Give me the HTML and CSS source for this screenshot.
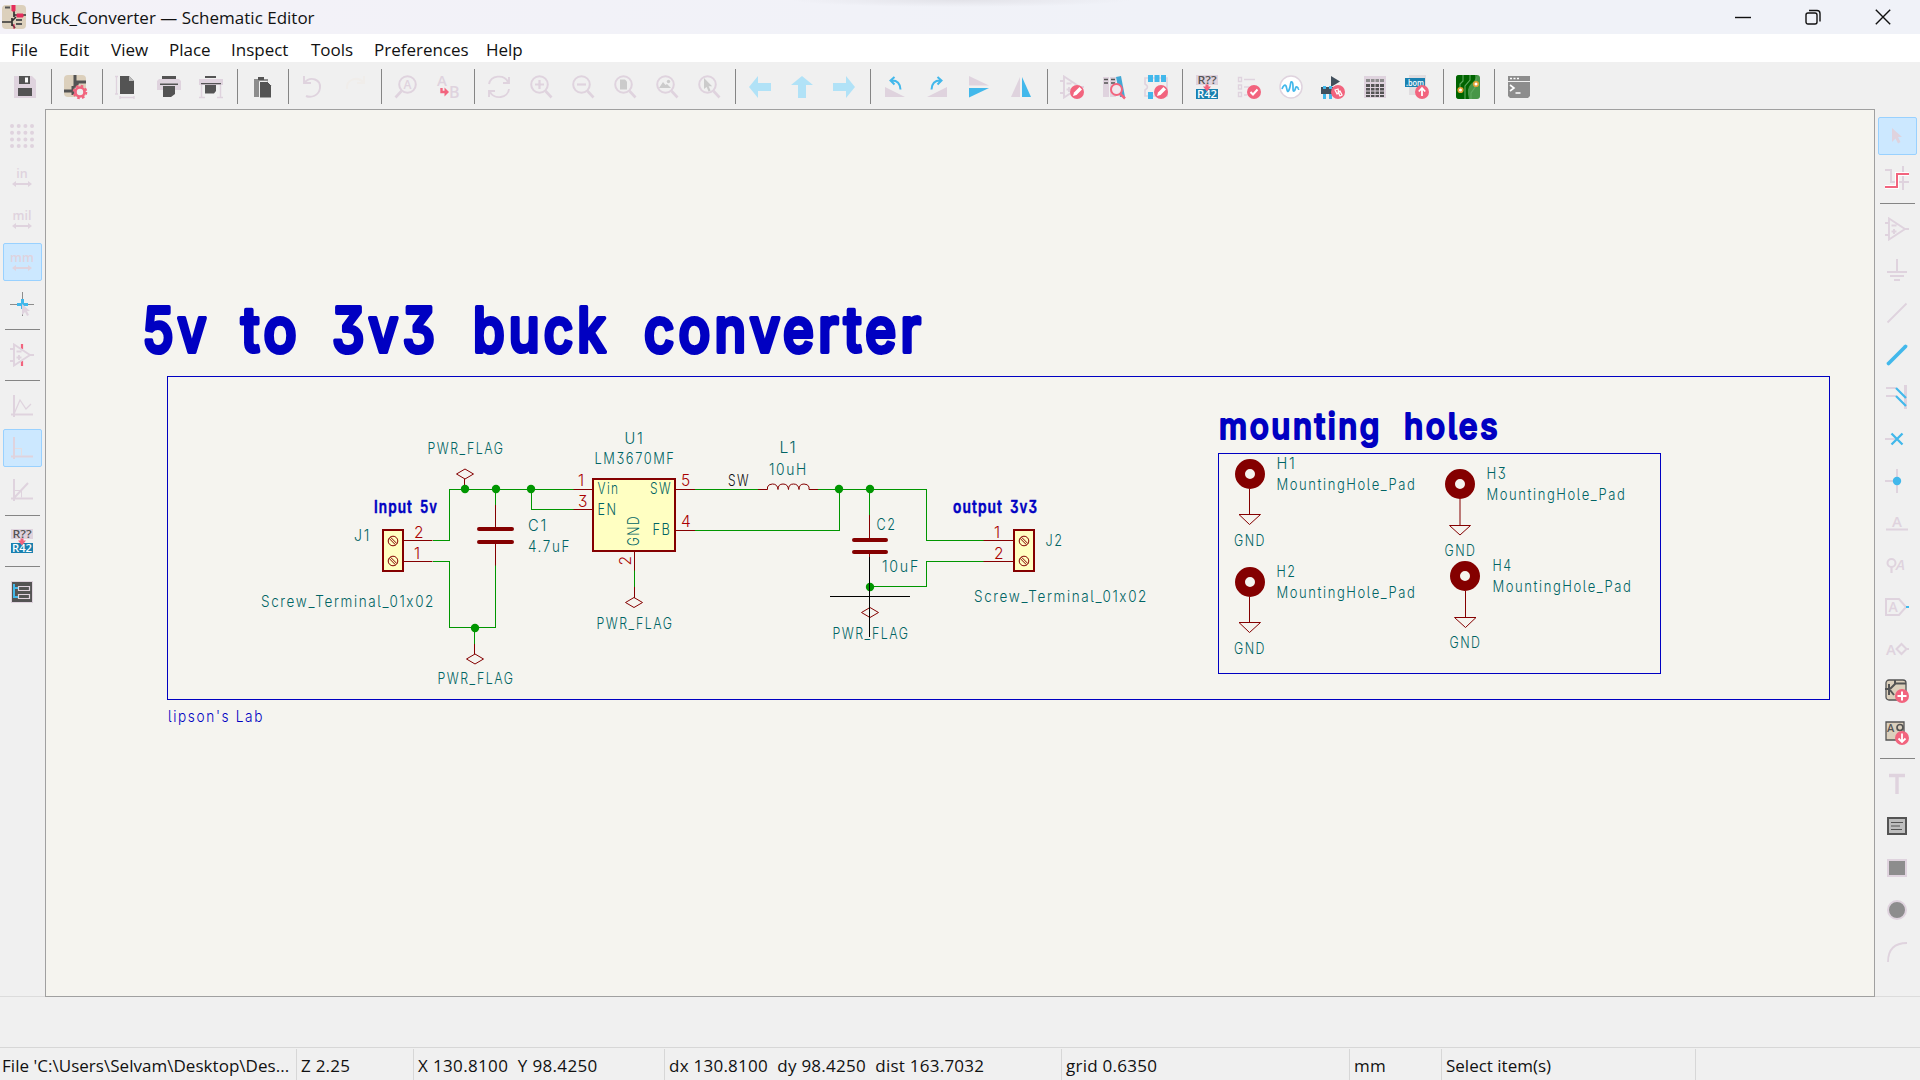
FILE: index.html
```html
<!DOCTYPE html>
<html lang="en">
<head>
<meta charset="utf-8">
<title>Buck_Converter — Schematic Editor</title>
<link rel="stylesheet" href="styles.css">
<script src="labels.js" defer></script>
</head>
<body>
<svg class="defs" width="0" height="0" aria-hidden="true">
  <symbol id="lens" viewBox="0 0 24 24"><circle cx="10.5" cy="9.5" r="8.3" fill="none" stroke="#dfd3de" stroke-width="2"/><path d="M16.5 16L22.5 22.5" stroke="#dfd3de" stroke-width="2.6"/></symbol>
  <symbol id="badge" viewBox="0 0 24 24"><circle cx="17" cy="17" r="7" fill="#f2647e"/></symbol>
  <symbol id="pencil" viewBox="0 0 24 24"><circle cx="17" cy="17" r="7" fill="#f2647e"/><path d="M13 21l1-3.500 5.500-5.500 2.500 2.500-5.500 5.500z" fill="#fff"/></symbol>
  <symbol id="opamp" viewBox="0 0 24 24"><path d="M4 1.5v21L20 12zM0 6h4M0 18h4M20 12h4M6.500 8.500h5M6.500 14.500h5M9 12v5" fill="none" stroke="#dfd3de" stroke-width="1.9"/></symbol>
  <symbol id="sheet" viewBox="0 0 24 24"><rect width="22" height="22" rx="4" fill="#dcd0bc"/></symbol>
  <symbol id="diamond" viewBox="0 0 20 12"><path d="M1.500 6L10 1l8.500 5L10 11z" fill="none" stroke="#840000" stroke-width="1"/></symbol>
  <symbol id="screw" viewBox="0 0 12 12"><circle cx="6" cy="6" r="4.800" fill="none" stroke="#840000"/><path d="M2.200 3.500L8.500 9.800M3.500 2.200L9.800 8.500" stroke="#840000"/></symbol>
  <symbol id="arrow-h" viewBox="0 0 24 24"><path d="M2 18l4-3v2h12v-2l4 3-4 3v-2H6v2z" fill="#dfd3de"/></symbol>
</svg>

<div class="window">
  <header class="titlebar">
    <svg class="app-icon" viewBox="0 0 24 24"><rect width="24" height="24" rx="4" fill="#dcd0bc"/><path d="M12 0v12M12 10h12M10 13v8M0 17h10M10 16l4-4M10 19l3 4" stroke="#333" stroke-width="1.700" fill="none"/><path d="M10 0h3v6h-3zM15 9h6v3h-6zM12 19v5" fill="#e52d5c" stroke="#e52d5c" stroke-width="1"/><path d="M3 2.500h5M14 15h6M14 19h6" stroke="#555" stroke-width="2"/></svg>
    <h1 class="title">Buck_Converter — Schematic Editor</h1>
    <div class="caption">
      <svg viewBox="0 0 16 16"><path d="M0 8.500h16"/></svg>
      <svg viewBox="0 0 16 16"><rect x="1" y="4" width="11" height="11" rx="2"/><path d="M4 1.500h8q3 0 3 3v8"/></svg>
      <svg viewBox="0 0 16 16"><path d="M.8.8l14.400 14.400M15.200.8L.8 15.200"/></svg>
    </div>
  </header>
  <nav class="menubar"><span>File</span><span>Edit</span><span>View</span><span>Place</span><span>Inspect</span><span>Tools</span><span>Preferences</span><span>Help</span></nav>

  <div class="toolbar">
    <b><svg viewBox="0 0 24 24"><path d="M1 1h18l4 4v18H1z" fill="#dfd3de"/><path d="M6 1h11v8H6zM5 13h14v8H5z" fill="#545454"/><path d="M12 2.500h3v5h-3z" fill="#fff"/></svg></b><i></i>
    <b><svg viewBox="0 0 24 24"><use href="#sheet"/><path d="M11 0v10M11 7h11M9 11v9M0 16h9M10 12l4-4" stroke="#545454" stroke-width="3" fill="none"/><circle cx="16" cy="17" r="4.500" fill="#eee" stroke="#f2647e" stroke-width="2.600"/><circle cx="16" cy="17" r="6.300" fill="none" stroke="#f2647e" stroke-width="2" stroke-dasharray="2.600 2.350"/></svg></b><i></i>
    <b><svg viewBox="0 0 24 24"><path d="M5 1h9l5 5v13H5z" fill="#545454"/><path d="M14 1l5 5h-5z" fill="#bbb"/><path d="M1.500 1v18M0 1.500h3M0 19h3M5 22.500h14M5 21v3M19 21v3" stroke="#dfd3de" stroke-width="1.300"/></svg></b>
    <b><svg viewBox="0 0 24 24"><path d="M2 4h20l2 2v9H0V6z" fill="#dfd3de"/><path d="M5 1h14v3H5zM3 8.500h18v1.600H3zM6 11h12v8l-4 3H6z" fill="#545454"/></svg></b>
    <b><svg viewBox="0 0 24 24"><path d="M0 4h24v6H0z" fill="#dfd3de"/><path d="M6 1h11v2H6zM2 8h20v1.300H2zM6 10h11v6l-2 2.500H6z" fill="#545454"/><path d="M2.500 10v12M21.500 10v12M0 22.500h6M18 22.500h6" stroke="#dfd3de" stroke-width="1.500"/></svg></b><i></i>
    <b><svg viewBox="0 0 24 24"><path d="M4 4h14v18H4z" fill="#8d8d8d"/><path d="M8 2h6v3H8z" fill="#545454"/><path d="M9.500 6.500h8l4 4V23h-12z" fill="#545454" stroke="#f0f0f0"/></svg></b><i></i>
    <b><svg viewBox="0 0 24 24"><path d="M3 1v7h7M3 8C10 0 20 5 19 13c-1 8-9 10-14 8" fill="none" stroke="#dfd3de" stroke-width="1.900"/></svg></b>
    <b><svg viewBox="0 0 24 24"><path d="M21 1v7h-7M21 8C14 0 3 5 4 14" fill="none" stroke="#f0edea" stroke-width="2"/></svg></b><i></i>
    <b><svg viewBox="0 0 24 24"><g transform="matrix(-1 0 0 1 24 0)"><use href="#lens"/></g><text x="9.500" y="14" font-size="12" class="ico-text" fill="#dfd3de">A</text></svg></b>
    <b><svg viewBox="0 0 24 24"><text x="1" y="11" font-size="15" class="ico-text" fill="#dfd3de">A</text><text x="13" y="23" font-size="16" class="ico-text" fill="#dfd3de">B</text><path d="M5.500 13v4h4" fill="none" stroke="#f2647e" stroke-width="2.400"/><path d="M8.500 12.500l4.500 4.500-4.500 4.500z" fill="#f2647e"/></svg></b><i></i>
    <b><svg viewBox="0 0 24 24"><path d="M2 9A10 9 0 0 1 21 7M22 2v6h-6M22 14A10 9 0 0 1 3 17M2 22v-6h6" fill="none" stroke="#dfd3de" stroke-width="1.900"/></svg></b>
    <b><svg viewBox="0 0 24 24"><use href="#lens"/><path d="M6 9.500h9M10.500 5v9" stroke="#dfd3de" stroke-width="2.200"/></svg></b>
    <b><svg viewBox="0 0 24 24"><use href="#lens"/><path d="M6 9.500h9" stroke="#dfd3de" stroke-width="2.200"/></svg></b>
    <b><svg viewBox="0 0 24 24"><use href="#lens"/><path d="M7 4.500h5l2 2v8H7z" fill="#cbcbcb"/></svg></b>
    <b><svg viewBox="0 0 24 24"><use href="#lens"/><path d="M4 13l4-6 2.500 3 1.500-1 4 4z" fill="#cbcbcb"/><circle cx="13.500" cy="6.500" r="1.700" fill="#cbcbcb"/></svg></b>
    <b><svg viewBox="0 0 24 24"><use href="#lens"/><path d="M7 3v11l2.600-2 2 4.500 2-1-2-4.300h3.500z" fill="#cbcbcb"/></svg></b><i></i>
    <b><svg viewBox="0 0 24 24"><path d="M1 12L10 1v7h13v8H10v7z" fill="#b1e2f7"/></svg></b>
    <b><svg viewBox="0 0 24 24"><path d="M12 1l11 9h-7v13H8V10H1z" fill="#b1e2f7"/></svg></b>
    <b><svg viewBox="0 0 24 24"><path d="M23 12L14 1v7H1v8h13v7z" fill="#b1e2f7"/></svg></b><i></i>
    <b><svg viewBox="0 0 24 24"><path d="M2 12v10h20z" fill="#dfd3de"/><path d="M9 5.500q8 0 8.500 9M11.500 2L7.500 5.500l4 4" fill="none" stroke="#42b8eb" stroke-width="2"/></svg></b>
    <b><svg viewBox="0 0 24 24"><path d="M22 12v10H2z" fill="#dfd3de"/><path d="M15 5.500q-8 0-8.500 9M12.500 2l4 3.500-4 4" fill="none" stroke="#42b8eb" stroke-width="2"/></svg></b>
    <b><svg viewBox="0 0 24 24"><path d="M2 1l20 9.500H2z" fill="#dfd3de"/><path d="M2 22.500L22 13H2z" fill="#42b8eb"/></svg></b>
    <b><svg viewBox="0 0 24 24"><path d="M11 2v20H2z" fill="#dfd3de"/><path d="M13 2v20h9z" fill="#42b8eb"/></svg></b><i></i>
    <b><svg viewBox="0 0 24 24"><use href="#opamp"/><use href="#pencil"/></svg></b>
    <b><svg viewBox="0 0 24 24"><path d="M1 2h6v20H1zM8 2h6v20H8z" fill="#dfd3de"/><path d="M2 4.500h4M2 8h4M9 4.500h4M9 8h4" stroke="#545454" stroke-width="1.300"/><path d="M14 2l5-1 4 21h-5z" fill="#42a8d5"/><circle cx="14.500" cy="14.500" r="5.500" fill="#f0e8ee" stroke="#f2647e" stroke-width="2"/><path d="M18 18.500l5 5" stroke="#f2647e" stroke-width="2.500"/></svg></b>
    <b><svg viewBox="0 0 24 24"><path d="M1 3h22v18H1v-6q5-3 0-6z" fill="none" stroke="#dfd3de" stroke-width="1.600"/><path d="M4 0h5v7H4zM10.500 0h5v7h-5zM17 0h5v7h-5zM4 17h5v7H4z" fill="#42b8eb"/><use href="#pencil"/></svg></b><i></i>
    <b><svg viewBox="0 0 24 24"><path d="M1 0h22v10H1z" fill="#dfd3de"/><path d="M1 14h22v10H1z" fill="#1a81b0"/><text x="2.500" y="9" font-size="10.500" textLength="19" class="ico-text" fill="#545454">R??</text><text x="2" y="23" font-size="10.500" textLength="20" class="ico-text" fill="#fff">R42</text><path d="M10.500 9.500h3v2H16l-4 5-4-5h2.500z" fill="#f2647e"/></svg></b>
    <b><svg viewBox="0 0 24 24"><path d="M1.500 2.500h3v4h-3zM1.500 10h3v4h-3zM1.500 17.500h3v4h-3zM7 4.500h11M7 12h5M7 20h3" fill="none" stroke="#dfd3de" stroke-width="1.400"/><use href="#badge"/><path d="M13.500 17l2.500 2.500 4.500-5" fill="none" stroke="#fff" stroke-width="2"/></svg></b>
    <b><svg viewBox="0 0 24 24"><circle cx="12" cy="12" r="11" fill="#fff" stroke="#dfd3de" stroke-width="1.500"/><path d="M3 14c1-3 3-5 4-3s1 8 3 4 1-9 3-8 0 10 2 9 1-5 3-4 1 3 2 2" fill="none" stroke="#42b8eb" stroke-width="1.700"/></svg></b>
    <b><svg viewBox="0 0 24 24"><path d="M10 1v11l9-5.500z" fill="#42505c"/><path d="M0 12h14v7H0z" fill="#42505c"/><path d="M2 11h3v3H2zM8 11h3v3H8zM2 19h3v5H2zM8 19h3v5H8z" fill="#42b8eb"/><use href="#badge"/><path d="M14 15l3-1 1 4-2 1zM17 17l2-1 2 4-2 1z" fill="none" stroke="#fff" stroke-width="1.300"/></svg></b>
    <b><svg viewBox="0 0 24 24"><path d="M1 1h22v22H1z" fill="#dfd3de"/><path d="M3 4h18v3H3z" fill="#8d8d8d"/><path d="M3 9h18v13H3z" fill="#545454"/><path d="M7.500 3v20M12 3v20M16.500 3v20M2 12.500h20M2 16h20M2 19.500h20" stroke="#dfd3de"/></svg></b>
    <b><svg viewBox="0 0 24 24"><path d="M4 0h17v20H4z" fill="#e0dde0"/><path d="M0 3h20v9H0z" fill="#1a81b0"/><text x="1" y="10.500" font-size="8.500" textLength="18" class="ico-text" fill="#fff">.bom</text><use href="#badge"/><path d="M17 21v-7M13.800 16.500l3.200-3.500 3.200 3.500" fill="none" stroke="#fff" stroke-width="1.800"/></svg></b><i></i>
    <b><svg viewBox="0 0 24 24"><rect width="24" height="24" rx="3" fill="#489648"/><path d="M3 0h18q-1 5-6 9t-2 15H3q-3 0-3-3V3q0-3 3-3z" fill="#006400"/><path d="M7 0v6l-3 3v4M14 0v5l-5 6v13M20 0v7M15 24v-6l5-7" fill="none" stroke="#5fa95f" stroke-width="1.100"/><circle cx="4.500" cy="15" r="2.300" fill="#fff" stroke="#e2a133" stroke-width="1.600"/><circle cx="20" cy="9" r="2.300" fill="#fff" stroke="#e2a133" stroke-width="1.600"/></svg></b><i></i>
    <b><svg viewBox="0 0 24 24"><path d="M1 1h22v5H1zM1 7h22v14l-2 2H3l-2-2z" fill="#8d8d8d"/><path d="M3 3.500h2M6.500 3.500h2M10 3.500h2" stroke="#fff" stroke-width="1.500"/><path d="M3 10l4 3-4 3M8.500 18h5" fill="none" stroke="#fff" stroke-width="1.600"/></svg></b>
  </div>

  <main class="workspace">
    <aside class="side left">
      <b><svg viewBox="0 0 24 24"><path d="M2 2h.01M8.700 2h.01M15.400 2h.01M22 2h.01M2 8.700h.01M8.700 8.700h.01M15.400 8.700h.01M22 8.700h.01M2 15.400h.01M8.700 15.400h.01M15.400 15.400h.01M22 15.400h.01M2 22h.01M8.700 22h.01M15.400 22h.01M22 22h.01" stroke="#dfd3de" stroke-width="4" stroke-linecap="round"/></svg></b>
      <b><svg viewBox="0 0 24 24"><text x="12" y="12" text-anchor="middle" font-size="12.500" class="ico-text" fill="#dfd3de">in</text><use href="#arrow-h"/></svg></b>
      <b><svg viewBox="0 0 24 24"><text x="12" y="12" text-anchor="middle" font-size="12.500" class="ico-text" fill="#dfd3de">mil</text><use href="#arrow-h"/></svg></b>
      <b class="on"><svg viewBox="0 0 24 24"><text x="12" y="12" text-anchor="middle" font-size="12.500" class="ico-text" fill="#dfd3de">mm</text><use href="#arrow-h"/></svg></b>
      <b><svg viewBox="0 0 24 24"><path d="M0 12.500h24M12.500 0v24" stroke="#8d8d8d"/><path d="M7 12.500h11M12.500 7v10" stroke="#42b8eb" stroke-width="3"/><path d="M12 12l8 7h-3l2 4-2 1-2-4-3 3z" fill="#dfd3de"/></svg></b><i></i>
      <b><svg viewBox="0 0 24 24"><path d="M12 1v5M12 18v5" stroke="#f2647e" stroke-width="2.200"/><use href="#opamp"/></svg></b><i></i>
      <b><svg viewBox="0 0 24 24"><path d="M4 1v22M1 20.500h22" stroke="#dfd3de" stroke-width="2"/><path d="M4 20l6-14 6 9 5-5" fill="none" stroke="#dfd3de" stroke-width="1.300"/></svg></b>
      <b class="on"><svg viewBox="0 0 24 24"><path d="M4 1v22M1 20.500h22" stroke="#dfd3de" stroke-width="2"/><path d="M5 12.500h6.500v7" fill="none" stroke="#e5dde0"/></svg></b>
      <b><svg viewBox="0 0 24 24"><path d="M4 1v22M1 20.500h22M4 20L18 5" stroke="#dfd3de" stroke-width="2"/><path d="M5 12.500h6.500v7" fill="none" stroke="#dfd3de"/></svg></b><i></i>
      <b><svg viewBox="0 0 24 24"><path d="M1 0h22v10H1z" fill="#dfd3de"/><path d="M1 14h22v10H1z" fill="#1a81b0"/><text x="2.500" y="9" font-size="10.500" textLength="19" class="ico-text" fill="#545454">R??</text><text x="2" y="23" font-size="10.500" textLength="20" class="ico-text" fill="#fff">R42</text><path d="M10.500 9.500h3v2H16l-4 5-4-5h2.500z" fill="#f2647e"/></svg></b><i></i>
      <b><svg viewBox="0 0 24 24"><path d="M1.500 1.500h21v21h-21z" fill="#545454" stroke="#dfd3de"/><path d="M4 4v13h4M4 8h4" fill="none" stroke="#42b8eb" stroke-width="2"/><path d="M8.500 6.500h11v4h-11zM8.500 14.500h11v4h-11z" fill="#545454" stroke="#dfd3de" stroke-width="1.200"/></svg></b>
    </aside>

    <section class="canvas">
      <svg class="sheet" viewBox="46 110 1828 886">
        <g class="frame"><path d="M167.500 376.500H1829.500V699.500H167.500zM1218.500 453.500H1660.500V673.500H1218.500z"/></g>
        <g class="heading title-text">
          <text x="142.500" y="352" textLength="68">5v</text><text x="241" y="352" textLength="60">to</text><text x="332" y="352" textLength="107">3v3</text><text x="473" y="352" textLength="137">buck</text><text x="644" y="352" textLength="281">converter</text>
        </g>
        <g class="heading sub-text"><text x="1219" y="439" textLength="163">mounting</text><text x="1404" y="439" textLength="96">holes</text></g>
        <g class="heading label-text"><text x="374" y="513" textLength="39">Input</text><text x="420" y="513" textLength="18">5v</text><text x="953" y="513" textLength="50">output</text><text x="1010" y="513" textLength="28">3v3</text></g>
        <g class="body"><rect x="383" y="530" width="20" height="41"/><rect x="593" y="479" width="82" height="72"/><rect x="1014" y="530" width="20" height="41"/></g>
        <g class="wire"><path d="M573.500 489.500H449.500V540.500H432.500M531.500 489.500V509.500H573.500M495.500 489.500V505M495.500 565V627.500H449.500V561.500H432.500M474.500 627.500V644M634.500 570V587M695 489.500H758M695 530.500H839.500V489.500M818 489.500H926.500V540.500H983.500M869.500 489.500V515M869.500 586.500H926.500V561.500H983.500"/></g>
        <g class="pin"><path d="M573.500 489.500H592M573.500 509.500H592M403.500 540.500H432.500M403.500 561.500H432.500M464.500 479V489M495.500 505V528M495.500 543V565.500M474.500 644V654M634.500 552V570.500M634.500 587V598M676 489.500H695M676 530.500H695M869.500 515V539M869.500 553V558M983.500 540.500H1013M983.500 561.500H1013"/>
          <path d="M758 489.500H767.500V487q1-3 5-3 5 0 5.500 5.500q0-5.500 5-5.500 5 0 5.500 5.500q0-5.500 5-5.500 5 0 5.500 5.500q0-5.500 5-5.500 4 0 5 3v2.500H818"/>
          <path d="M1249.500 489V514.500M1239 514.500H1260.500L1249.500 524.500zM1249.500 597V622.500M1239 622.500H1260.500L1249.500 632.500zM1460 499V525.500M1449.500 525.500H1470.500L1460 535zM1465.500 591V617.500M1454.500 617.500H1476L1465.500 627.500z"/></g>
        <g class="plate"><path d="M479 529H512M479 542H512M854 540H886M854 552H886"/></g>
        <g class="hole"><circle cx="1250" cy="474" r="10"/><circle cx="1250" cy="582" r="10"/><circle cx="1460" cy="484" r="10"/><circle cx="1465" cy="576" r="10"/></g>
        <use href="#diamond" x="455" y="468" width="20" height="12"/><use href="#diamond" x="465" y="653" width="20" height="12"/><use href="#diamond" x="624" y="596.500" width="20" height="12"/><use href="#diamond" x="860" y="606.500" width="20" height="12"/>
        <use href="#screw" x="387" y="535" width="12" height="12"/><use href="#screw" x="387" y="555" width="12" height="12"/><use href="#screw" x="1018" y="535" width="12" height="12"/><use href="#screw" x="1018" y="555" width="12" height="12"/>
        <g class="junction"><circle cx="465" cy="489" r="4.200"/><circle cx="496" cy="489" r="4.200"/><circle cx="531" cy="489" r="4.200"/><circle cx="475" cy="628" r="4.200"/><circle cx="839" cy="489" r="4.200"/><circle cx="870" cy="489" r="4.200"/><circle cx="870" cy="587" r="4.200"/></g>
        <g class="field">
          <text x="427.500" y="453.500" textLength="77">PWR_FLAG</text><text x="437.500" y="684" textLength="77">PWR_FLAG</text><text x="596.500" y="628.500" textLength="77">PWR_FLAG</text><text x="832.500" y="638.500" textLength="77">PWR_FLAG</text>
          <text x="624.500" y="443.500" textLength="20">U1</text><text x="594.500" y="464" textLength="81">LM3670MF</text><text x="597.500" y="494" textLength="22">Vin</text><text x="597.500" y="515" textLength="20">EN</text><text x="650" y="494" textLength="22">SW</text><text x="652.500" y="535" textLength="19">FB</text><text transform="translate(639 546) rotate(-90)" textLength="31">GND</text>
          <text x="528" y="530.500" textLength="20">C1</text><text x="528" y="551.500" textLength="43">4.7uF</text><text x="354" y="541" textLength="17">J1</text><text x="261" y="607" textLength="174">Screw_Terminal_01x02</text>
          <text x="779.500" y="453" textLength="18">L1</text><text x="769" y="474.500" textLength="39">10uH</text><text x="876.500" y="530" textLength="20">C2</text><text x="882" y="571.500" textLength="38">10uF</text><text x="1045.500" y="546" textLength="18">J2</text><text x="974" y="602" textLength="174">Screw_Terminal_01x02</text>
          <text x="1276.500" y="469" textLength="20">H1</text><text x="1276.500" y="489.500" textLength="140">MountingHole_Pad</text><text x="1234" y="545.500" textLength="32">GND</text>
          <text x="1276.500" y="577" textLength="20">H2</text><text x="1276.500" y="597.500" textLength="140">MountingHole_Pad</text><text x="1234" y="653.500" textLength="32">GND</text>
          <text x="1486.500" y="479" textLength="21">H3</text><text x="1486.500" y="500" textLength="140">MountingHole_Pad</text><text x="1444.500" y="556" textLength="32">GND</text>
          <text x="1492.500" y="571" textLength="20">H4</text><text x="1492.500" y="592" textLength="140">MountingHole_Pad</text><text x="1449.500" y="648" textLength="32">GND</text>
        </g>
        <g class="field number"><text x="578" y="486">1</text><text x="578" y="507">3</text><text x="681" y="486">5</text><text x="681" y="527">4</text><text x="414" y="538">2</text><text x="414" y="558.500">1</text><text x="994" y="538">1</text><text x="994" y="558.500">2</text><text transform="translate(631 565.500) rotate(-90)">2</text></g>
        <text class="field net" x="728" y="486" textLength="22">SW</text>
        <text class="field note" x="168" y="722" textLength="96">lipson's Lab</text>
        <path class="crosshair" d="M830 596.500H910M869.500 557V637"/>
      </svg>
    </section>

    <aside class="side right">
      <b class="on"><svg viewBox="0 0 24 24"><path d="M7 4l10 9h-4l2.500 5-2.500 1.500-2.500-5L7 18z" fill="#dfd3de"/></svg></b>
      <b><svg viewBox="0 0 24 24"><path d="M0 4h6v12h18M18 0v24" fill="none" stroke="#dfd3de" stroke-width="2"/><path d="M0 21h12V8h12" fill="none" stroke="#fff" stroke-width="4"/><path d="M0 21h12V8h12" fill="none" stroke="#f2647e" stroke-width="2"/></svg></b><i></i>
      <b><svg viewBox="0 0 24 24"><use href="#opamp"/></svg></b>
      <b><svg viewBox="0 0 24 24"><path d="M12 0v13M2 13h20M5 17h14M9 21h6" stroke="#dfd3de" stroke-width="2"/></svg></b>
      <b><svg viewBox="0 0 24 24"><path d="M2.500 21.500l19-19" stroke="#dfd3de" stroke-width="1.800"/></svg></b>
      <b><svg viewBox="0 0 24 24"><path d="M3.500 20.500l17-17" stroke="#42b8eb" stroke-width="3.800" stroke-linecap="round"/></svg></b>
      <b><svg viewBox="0 0 24 24"><path d="M1 3h10M1 11h10" stroke="#dfd3de" stroke-width="2"/><path d="M20.500 0v24" stroke="#dfd3de" stroke-width="3"/><path d="M11 3l10 10M11 11l10 10" stroke="#42b8eb" stroke-width="2.200"/></svg></b>
      <b><svg viewBox="0 0 24 24"><path d="M0 12h12" stroke="#dfd3de" stroke-width="2"/><path d="M6.500 6.500l11 11M17.500 6.500l-11 11" stroke="#42b8eb" stroke-width="2.300"/></svg></b>
      <b><svg viewBox="0 0 24 24"><path d="M0 12h12M12 0v24M12 12h4" stroke="#dfd3de" stroke-width="2"/><circle cx="12" cy="12" r="4.200" fill="#42b8eb"/></svg></b>
      <b><svg viewBox="0 0 24 24"><text x="12" y="16" text-anchor="middle" font-size="15" class="ico-text" fill="#dfd3de">A</text><path d="M1 18.500h22" stroke="#dfd3de" stroke-width="2"/></svg></b>
      <b><svg viewBox="0 0 24 24"><circle cx="6.500" cy="10" r="4" fill="none" stroke="#dfd3de" stroke-width="2"/><path d="M6.500 14v6" stroke="#dfd3de" stroke-width="2.200"/><text x="11" y="17" font-size="15" font-style="italic" class="ico-text" fill="#dfd3de">A</text></svg></b>
      <b><svg viewBox="0 0 24 24"><path d="M1 4h13l7 8-7 8H1z" fill="none" stroke="#dfd3de" stroke-width="2"/><text x="3.500" y="17" font-size="14" class="ico-text" fill="#dfd3de">A</text><path d="M21 12h3" stroke="#42b8eb" stroke-width="2"/></svg></b>
      <b><svg viewBox="0 0 24 24"><text x="1" y="17.500" font-size="15" class="ico-text" fill="#dfd3de">A</text><path d="M11.500 12l5-5 5 5-5 5zM21 12h3" fill="none" stroke="#dfd3de" stroke-width="2"/></svg></b>
      <b><svg viewBox="0 0 24 24"><rect x="1" y="1" width="20" height="20" rx="3" fill="#dcd0bc" stroke="#545454" stroke-width="1.300"/><path d="M4 5v11M0 10h5M5 10l5-5V1M10 4.500h11M5 11l4 5" fill="none" stroke="#545454" stroke-width="2"/><use href="#badge"/><path d="M17 12.500v9M12.500 17h9" stroke="#fff" stroke-width="2"/></svg></b>
      <b><svg viewBox="0 0 24 24"><path d="M1 1h18v18H1z" fill="#dcd0bc" stroke="#545454" stroke-width="1.300"/><text x="2" y="11" font-size="11" class="ico-text" fill="#545454">A</text><circle cx="15" cy="6.500" r="3" fill="none" stroke="#545454" stroke-width="1.700"/><use href="#badge"/><path d="M17 12.500v8M13.500 17.500l3.500 3.500 3.500-3.500" fill="none" stroke="#fff" stroke-width="1.800"/></svg></b><i></i>
      <b><svg viewBox="0 0 24 24"><path d="M4 3.500h16M12 3.500V22" stroke="#dfd3de" stroke-width="3.500"/></svg></b>
      <b><svg viewBox="0 0 24 24"><path d="M3 4h18v16H3z" fill="#bebebe" stroke="#545454" stroke-width="2"/><path d="M6 8.500h12M6 12h9M6 15.500h11" stroke="#545454" stroke-width="1.200"/></svg></b>
      <b><svg viewBox="0 0 24 24"><path d="M3 4h18v16H3z" fill="#8d8d8d" stroke="#dfd3de" stroke-width="2"/></svg></b>
      <b><svg viewBox="0 0 24 24"><circle cx="12" cy="12" r="9" fill="#8d8d8d" stroke="#dfd3de" stroke-width="2"/></svg></b>
      <b><svg viewBox="0 0 24 24"><path d="M3 22Q3 3 22 3" fill="none" stroke="#dfd3de" stroke-width="1.800"/></svg></b>
    </aside>
  </main>

  <div class="message-panel"></div>
  <footer class="status"><span>File 'C:\Users\Selvam\Desktop\Des...</span><span>Z 2.25</span><span>X 130.8100&nbsp; Y 98.4250</span><span>dx 130.8100&nbsp; dy 98.4250&nbsp; dist 163.7032</span><span>grid 0.6350</span><span>mm</span><span>Select item(s)</span><span></span></footer>
</div>
</body>
</html>
```
FILE: labels.js
```js
// Schematic labels keep a fixed width, so glyphs are condensed together with their spacing.
document.querySelectorAll("text[textLength]").forEach(function (label) {
  label.setAttribute("lengthAdjust", "spacingAndGlyphs");
});
```
FILE: styles.css
```css
* { box-sizing: border-box; }
body { margin: 0; background: #f0f0f0; font-family: "Open Sans", "Noto Sans", sans-serif; font-size: 17px; color: #111; }
.defs { display: block; position: absolute; }
.window { width: 1920px; height: 1080px; display: grid; grid-template-rows: 34px 28px 47px 888px 51px 32px; overflow: hidden; }

.titlebar { display: flex; align-items: center; padding-left: 2px; background: radial-gradient(ellipse 170px 7px at 960px 0, #e2e2e8, transparent), linear-gradient(90deg, #f4f2f8, #f0f2f8 60%); }
.app-icon { width: 24px; height: 24px; margin-right: 5px; }
.title { margin: 0; flex: 1; font-size: 17px; font-weight: 400; }
.caption { display: flex; gap: 54px; padding-right: 29px; }
.caption svg { width: 16px; height: 16px; fill: none; stroke: #111; stroke-width: 1.4; }

.menubar { display: grid; grid-template-columns: 48px 52px 58px 62px 80px 63px 112px 60px; padding: 2px 0 0 11px; align-items: center; background: #fff; white-space: nowrap; }

.toolbar { display: flex; align-items: center; padding: 2px 0 0 4px; }
.toolbar b, .side b { display: flex; flex: none; align-items: center; justify-content: center; width: 42px; height: 42px; }
.toolbar b svg, .side b svg { width: 24px; height: 24px; overflow: visible; }
.toolbar i { flex: none; width: 9px; height: 35px; background: linear-gradient(#858585, #858585) 5px 0 / 1px 100% no-repeat; }

.workspace { display: grid; grid-template-columns: 45px 1830px 45px; }
.side { display: flex; flex-direction: column; align-items: center; padding-top: 6px; border-bottom: 1px solid #dcdcdc; }
.side b { width: 39px; height: 38px; margin: 2px 0; border: 1px solid transparent; border-radius: 2px; padding-right: 1px; }
.side b.on { background: #cce8ff; border-color: #99d1ff; }
.side i { flex: none; width: 35px; height: 9px; background: linear-gradient(#858585, #858585) 0 4px / 100% 1px no-repeat; }
.canvas { border: 1px solid #a0a0a0; background: #f5f4ef; }
.sheet { display: block; width: 1828px; height: 886px; }
.message-panel { border-bottom: 1px solid #d7d7d7; }
.status { display: grid; grid-template-columns: 297px 117px 251px 397px 288px 92px 254px 224px; align-items: center; white-space: nowrap; }
.status span { height: 31px; padding-left: 4px; line-height: 33px; border-right: 1px solid #d7d7d7; letter-spacing: .25px; }
.status span:first-child { padding-left: 2px; letter-spacing: .03px; }
.status span:nth-child(3) { letter-spacing: .35px; }
.status span:nth-child(7) { letter-spacing: 0; }
.status span:last-child { border-right: 0; }

.ico-text { font-family: "Open Sans", sans-serif; font-weight: 600; }
.frame, .wire, .pin, .plate, .crosshair { fill: none; }
.frame { stroke: #0000c2; shape-rendering: crispEdges; }
.wire { stroke: #009600; shape-rendering: crispEdges; }
.pin { stroke: #840000; }
.plate { stroke: #840000; stroke-width: 4; stroke-linecap: round; }
.body { fill: #ffffc2; stroke: #840000; stroke-width: 2; }
.hole { fill: none; stroke: #840000; stroke-width: 10; }
.junction { fill: #009600; }
.crosshair { stroke: #000; shape-rendering: crispEdges; }
.heading text { font-family: Inter, "Noto Sans", sans-serif; font-weight: 500; font-feature-settings: "cv05", "cv09", "calt" 0; letter-spacing: .08em; fill: #0000c2; stroke: #0000c2; stroke-linejoin: round; }
.title-text text { font-size: 62px; stroke-width: 4.2; }
.sub-text text { font-size: 36px; stroke-width: 2.2; }
.label-text text { font-size: 17px; font-weight: 600; stroke-width: .5; }
.field { font-family: Inter, "Noto Sans", sans-serif; font-weight: 300; font-size: 15.5px; font-feature-settings: "cv05", "cv09", "calt" 0; letter-spacing: .12em; fill: #006464; }
.number { fill: #a90000; }
.net { fill: #0f0f0f; }
.note { fill: #0000c2; }
```
